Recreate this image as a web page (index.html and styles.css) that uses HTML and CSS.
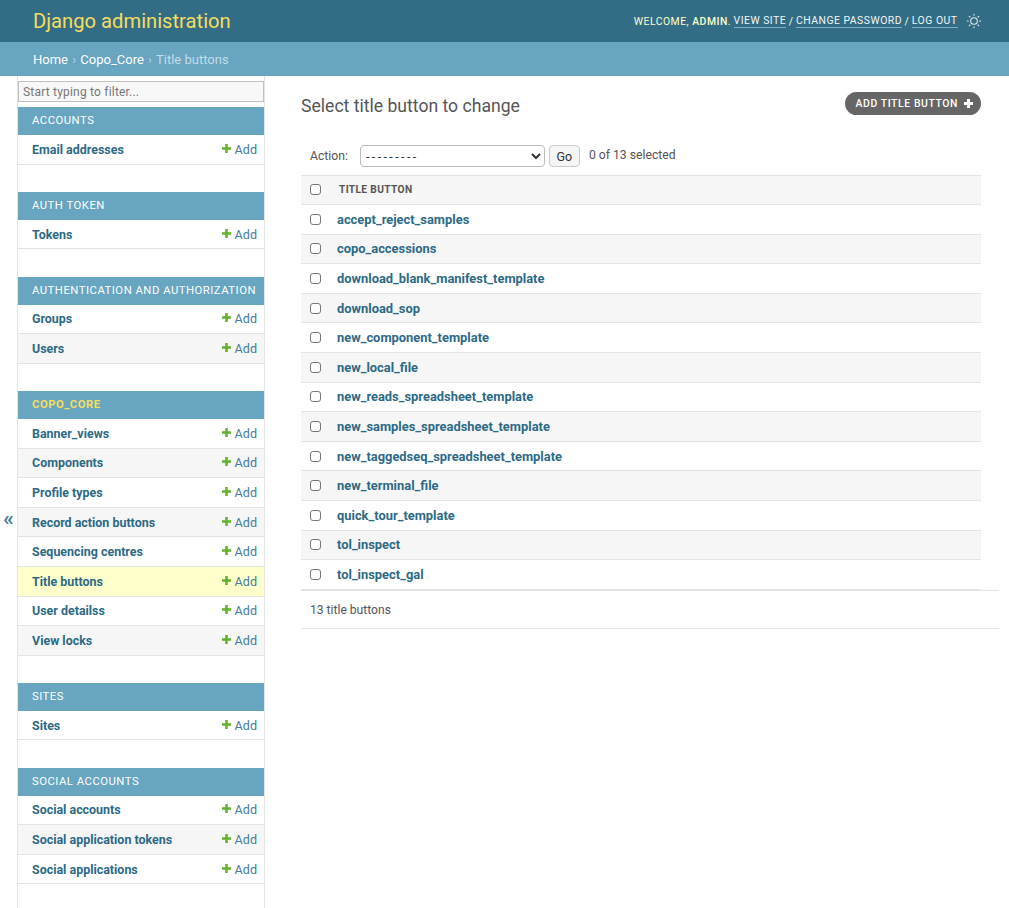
FILE: index.html
```html
<!DOCTYPE html>
<html lang="en">

<head>
    <meta charset="UTF-8" />
    <title>Select title button to change | Django site admin</title>
    <link rel="stylesheet" href="styles.css">
</head>

<body>

    <header class="topbar">
        <a class="brand" href="#">Django administration</a>
        <div class="usertools">
            <span>Welcome, <strong>admin</strong>.</span>
            <a href="#">View site</a> /
            <a href="#">Change password</a> /
            <a href="#">Log out</a>
            <svg class="theme-icon" width="16" height="16" viewBox="0 0 24 24" fill="none" stroke-width="1.6">
                <circle cx="12" cy="12" r="5" stroke="#e4e9ec" />
                <path stroke="#e4e9ec" stroke-linecap="round" d="M12 2v1.500M12 20.500V22M2 12h1.500M20.500 12H22M4.900 4.900l1.100 1.100M18 18l1.100 1.100M4.900 19.100L6 18M18 6l1.100-1.100" />
            </svg>
        </div>
    </header>

    <nav class="breadcrumbs">
        <a href="#">Home</a> <span class="sep">›</span>
        <a href="#">Copo_Core</a> <span class="sep">›</span> Title buttons
    </nav>

    <div class="main">
        <div class="toggle-col"><button class="toggle" type="button">«</button></div>

        <aside class="sidebar">
            <input class="nav-filter" type="search" placeholder="Start typing to filter..." />

            <section class="module">
                <h2 class="caption">Accounts</h2>
                <div class="row"><a class="name" href="#">Email addresses</a><a class="add" href="#"><svg class="plus" viewBox="0 0 10 10"><path d="M3.600 0h2.800v3.600H10v2.800H6.400V10H3.600V6.400H0V3.600h3.600z" /></svg>Add</a></div>
            </section>

            <section class="module">
                <h2 class="caption">Auth Token</h2>
                <div class="row"><a class="name" href="#">Tokens</a><a class="add" href="#"><svg class="plus" viewBox="0 0 10 10"><path d="M3.600 0h2.800v3.600H10v2.800H6.400V10H3.600V6.400H0V3.600h3.600z" /></svg>Add</a></div>
            </section>

            <section class="module">
                <h2 class="caption">Authentication and Authorization</h2>
                <div class="row"><a class="name" href="#">Groups</a><a class="add" href="#"><svg class="plus" viewBox="0 0 10 10"><path d="M3.600 0h2.800v3.600H10v2.800H6.400V10H3.600V6.400H0V3.600h3.600z" /></svg>Add</a></div>
                <div class="row alt"><a class="name" href="#">Users</a><a class="add" href="#"><svg class="plus" viewBox="0 0 10 10"><path d="M3.600 0h2.800v3.600H10v2.800H6.400V10H3.600V6.400H0V3.600h3.600z" /></svg>Add</a></div>
            </section>

            <section class="module">
                <h2 class="caption current-app">Copo_Core</h2>
                <div class="row"><a class="name" href="#">Banner_views</a><a class="add" href="#"><svg class="plus" viewBox="0 0 10 10"><path d="M3.600 0h2.800v3.600H10v2.800H6.400V10H3.600V6.400H0V3.600h3.600z" /></svg>Add</a></div>
                <div class="row alt"><a class="name" href="#">Components</a><a class="add" href="#"><svg class="plus" viewBox="0 0 10 10"><path d="M3.600 0h2.800v3.600H10v2.800H6.400V10H3.600V6.400H0V3.600h3.600z" /></svg>Add</a></div>
                <div class="row"><a class="name" href="#">Profile types</a><a class="add" href="#"><svg class="plus" viewBox="0 0 10 10"><path d="M3.600 0h2.800v3.600H10v2.800H6.400V10H3.600V6.400H0V3.600h3.600z" /></svg>Add</a></div>
                <div class="row alt"><a class="name" href="#">Record action buttons</a><a class="add" href="#"><svg class="plus" viewBox="0 0 10 10"><path d="M3.600 0h2.800v3.600H10v2.800H6.400V10H3.600V6.400H0V3.600h3.600z" /></svg>Add</a></div>
                <div class="row"><a class="name" href="#">Sequencing centres</a><a class="add" href="#"><svg class="plus" viewBox="0 0 10 10"><path d="M3.600 0h2.800v3.600H10v2.800H6.400V10H3.600V6.400H0V3.600h3.600z" /></svg>Add</a></div>
                <div class="row current"><a class="name" href="#">Title buttons</a><a class="add" href="#"><svg class="plus" viewBox="0 0 10 10"><path d="M3.600 0h2.800v3.600H10v2.800H6.400V10H3.600V6.400H0V3.600h3.600z" /></svg>Add</a></div>
                <div class="row"><a class="name" href="#">User detailss</a><a class="add" href="#"><svg class="plus" viewBox="0 0 10 10"><path d="M3.600 0h2.800v3.600H10v2.800H6.400V10H3.600V6.400H0V3.600h3.600z" /></svg>Add</a></div>
                <div class="row alt"><a class="name" href="#">View locks</a><a class="add" href="#"><svg class="plus" viewBox="0 0 10 10"><path d="M3.600 0h2.800v3.600H10v2.800H6.400V10H3.600V6.400H0V3.600h3.600z" /></svg>Add</a></div>
            </section>

            <section class="module">
                <h2 class="caption">Sites</h2>
                <div class="row"><a class="name" href="#">Sites</a><a class="add" href="#"><svg class="plus" viewBox="0 0 10 10"><path d="M3.600 0h2.800v3.600H10v2.800H6.400V10H3.600V6.400H0V3.600h3.600z" /></svg>Add</a></div>
            </section>

            <section class="module">
                <h2 class="caption">Social Accounts</h2>
                <div class="row"><a class="name" href="#">Social accounts</a><a class="add" href="#"><svg class="plus" viewBox="0 0 10 10"><path d="M3.600 0h2.800v3.600H10v2.800H6.400V10H3.600V6.400H0V3.600h3.600z" /></svg>Add</a></div>
                <div class="row alt"><a class="name" href="#">Social application tokens</a><a class="add" href="#"><svg class="plus" viewBox="0 0 10 10"><path d="M3.600 0h2.800v3.600H10v2.800H6.400V10H3.600V6.400H0V3.600h3.600z" /></svg>Add</a></div>
                <div class="row"><a class="name" href="#">Social applications</a><a class="add" href="#"><svg class="plus" viewBox="0 0 10 10"><path d="M3.600 0h2.800v3.600H10v2.800H6.400V10H3.600V6.400H0V3.600h3.600z" /></svg>Add</a></div>
            </section>
        </aside>

        <main class="content">
            <div class="content-head">
                <h1>Select title button to change</h1>
                <a class="addlink" href="#">Add title button<svg class="plus-white" viewBox="0 0 10 10"><path d="M3.300 0h3.400v3.300H10v3.400H6.700V10H3.300V6.700H0V3.300h3.300z" /></svg></a>
            </div>

            <div class="changelist">
                <div class="actions">
                    <label for="action">Action:</label>
                    <select id="action">
                        <option>---------</option>
                    </select>
                    <button class="go" type="button">Go</button>
                    <span class="counter">0 of 13 selected</span>
                </div>

                <table class="results">
                    <thead>
                        <tr><th class="check"><input type="checkbox" /></th><th class="title">Title button</th></tr>
                    </thead>
                    <tbody>
                        <tr><td class="check"><input type="checkbox" /></td><td><a href="#">accept_reject_samples</a></td></tr>
                        <tr><td class="check"><input type="checkbox" /></td><td><a href="#">copo_accessions</a></td></tr>
                        <tr><td class="check"><input type="checkbox" /></td><td><a href="#">download_blank_manifest_template</a></td></tr>
                        <tr><td class="check"><input type="checkbox" /></td><td><a href="#">download_sop</a></td></tr>
                        <tr><td class="check"><input type="checkbox" /></td><td><a href="#">new_component_template</a></td></tr>
                        <tr><td class="check"><input type="checkbox" /></td><td><a href="#">new_local_file</a></td></tr>
                        <tr><td class="check"><input type="checkbox" /></td><td><a href="#">new_reads_spreadsheet_template</a></td></tr>
                        <tr><td class="check"><input type="checkbox" /></td><td><a href="#">new_samples_spreadsheet_template</a></td></tr>
                        <tr><td class="check"><input type="checkbox" /></td><td><a href="#">new_taggedseq_spreadsheet_template</a></td></tr>
                        <tr><td class="check"><input type="checkbox" /></td><td><a href="#">new_terminal_file</a></td></tr>
                        <tr><td class="check"><input type="checkbox" /></td><td><a href="#">quick_tour_template</a></td></tr>
                        <tr><td class="check"><input type="checkbox" /></td><td><a href="#">tol_inspect</a></td></tr>
                        <tr><td class="check"><input type="checkbox" /></td><td><a href="#">tol_inspect_gal</a></td></tr>
                    </tbody>
                </table>

                <p class="paginator">13 title buttons</p>
            </div>
        </main>
    </div>

</body>

</html>
```

FILE: styles.css
```css
* {
    box-sizing: border-box;
}

html,
body {
    height: 100%;
}

body {
    margin: 0;
    font-family: Roboto, "Liberation Sans", sans-serif;
    font-size: 14px;
    color: #333;
    background: #fff;
    overflow: hidden;
}

a {
    color: #264b5d;
    text-decoration: none;
}

/* header */
.topbar {
    height: 42px;
    padding: 0 27px 0 33px;
    background: #336d85;
    display: flex;
    justify-content: space-between;
    align-items: center;
}

.brand {
    color: #f5dd5d;
    font-size: 20.2px;
    font-weight: 400;
}

.usertools {
    display: flex;
    align-items: center;
    gap: 2.5px;
    color: #ffc;
    font-size: 10.4px;
    letter-spacing: 0.5px;
    text-transform: uppercase;
}

.usertools strong {
    font-weight: 500;
}

.usertools a {
    color: #f1f5f7;
    border-bottom: 1px solid #79aec8;
    line-height: 13px;
}

.theme-icon {
    margin-left: 6px;
}

.breadcrumbs {
    height: 34px;
    padding: 0 33px;
    background: #67a5c0;
    color: #c4dce8;
    font-size: 13px;
    line-height: 35px;
}

.breadcrumbs a {
    color: #fff;
}

.breadcrumbs .sep {
    margin: 0 1px;
    color: #b6d4e2;
}

/* layout */
.main {
    display: flex;
    height: 832px;
}

.toggle-col {
    width: 18px;
    padding-top: 54px;
    border-right: 1px solid #e4e4e4;
    display: flex;
    align-items: center;
    justify-content: center;
}

.toggle {
    padding: 0;
    border: 0;
    background: none;
    color: #447e9b;
    font-family: Roboto, sans-serif;
    font-size: 21px;
    font-weight: 700;
    line-height: 1;
    margin-top: -1px;
}

.sidebar {
    width: 247px;
    flex: none;
    border-right: 1px solid #e4e4e4;
    padding-top: 5px;
}

.nav-filter {
    display: block;
    width: 246px;
    height: 21px;
    margin: 0 0 5px;
    padding: 0 4px;
    border: 1px solid #c0c0c0;
    border-radius: 0;
    background: #f8f8f8;
    font-family: Roboto, sans-serif;
    font-size: 12px;
    outline: 0;
}

.nav-filter::placeholder {
    color: #777;
    letter-spacing: 0.2px;
}

.module {
    margin-bottom: 27.200px;
}

.caption {
    height: 28px;
    margin: 0;
    padding: 0 14px;
    background: #67a5c0;
    color: #fff;
    font-size: 11.300px;
    font-weight: 400;
    letter-spacing: 0.5px;
    line-height: 28px;
    text-transform: uppercase;
    white-space: nowrap;
}

.current-app {
    font-weight: 700;
    color: #f5dd5d;
}

.row {
    height: 29.600px;
    padding: 0 7px 0 14px;
    display: flex;
    justify-content: space-between;
    align-items: center;
    border-bottom: 1px solid #e4e4e4;
    font-size: 12.450px;
}

.row.alt {
    background: #f6f6f6;
}

.row.current {
    background: #ffc;
}

.name {
    color: #2d6a85;
    font-weight: 700;
}

.add {
    color: #447e9b;
    display: flex;
    align-items: center;
    gap: 4px;
    font-size: 12.600px;
}

.plus {
    width: 9px;
    height: 9px;
    fill: #62b02c;
    margin-top: -2px;
}

/* right column */
.content {
    flex: 1;
    padding: 18px 10px 0 36px;
    min-width: 0;
}

.content-head {
    height: 47px;
    padding-right: 18px;
    display: flex;
    justify-content: space-between;
    align-items: flex-start;
}

h1 {
    margin: 0;
    color: #555;
    font-size: 17.600px;
    font-weight: 400;
    line-height: 24px;
}

.addlink {
    height: 23px;
    margin-top: -2px;
    padding: 0 8px 0 11px;
    display: flex;
    align-items: center;
    gap: 6px;
    border-radius: 12px;
    background: #666;
    color: #fff;
    font-size: 10.400px;
    font-weight: 500;
    letter-spacing: 0.6px;
    text-transform: uppercase;
}

.plus-white {
    width: 9px;
    height: 9px;
    fill: #fff;
    margin-top: -1px;
}

.actions {
    width: 680px;
    height: 30px;
    padding-left: 9px;
    display: flex;
    align-items: center;
    font-size: 12.200px;
    color: #555;
}

.actions select {
    width: 185px;
    height: 22px;
    margin-left: 12px;
    padding: 0 0 0 1px;
    border: 1px solid #bbb;
    border-radius: 4px;
    background: #fff;
    font-family: Roboto, sans-serif;
    font-size: 12.500px;
    letter-spacing: 2.4px;
    color: #333;
}

.go {
    width: 31px;
    height: 22px;
    margin-left: 4px;
    padding: 0;
    border: 1px solid #ccc;
    border-radius: 4px;
    background: #f5f5f5;
    font-family: Roboto, sans-serif;
    font-size: 12.500px;
    color: #333;
}

.counter {
    margin-left: 9px;
    margin-top: -3px;
}

.results {
    width: 680px;
    margin-top: 3.500px;
    border-collapse: collapse;
    border-top: 1px solid #e4e4e4;
}

.results th {
    height: 29.500px;
    padding: 0;
    background: #f6f6f6;
    border-bottom: 1px solid #e4e4e4;
    color: #555;
    font-size: 10.200px;
    font-weight: 700;
    letter-spacing: 0.35px;
    text-align: left;
    text-transform: uppercase;
}

.results .title {
    padding-left: 2px;
}

.results td {
    height: 29.600px;
    padding: 0;
    border-bottom: 1px solid #e4e4e4;
    font-size: 12.900px;
}

.results tbody tr:nth-child(even) td {
    background: #f6f6f6;
}

.results td a {
    color: #2d6a85;
    font-weight: 700;
}

.results .check {
    width: 36px;
    padding-left: 9px;
}

.results input {
    display: block;
    width: 11px;
    height: 11px;
    margin: 0;
    appearance: none;
    border: 1px solid #777;
    border-radius: 3px;
    background: #fff;
}

.paginator {
    width: 698px;
    height: 39.500px;
    margin: 0;
    padding-left: 9px;
    border-top: 1px solid #e4e4e4;
    border-bottom: 1px solid #e4e4e4;
    font-size: 12.100px;
    line-height: 39.500px;
    color: #555;
}
```
